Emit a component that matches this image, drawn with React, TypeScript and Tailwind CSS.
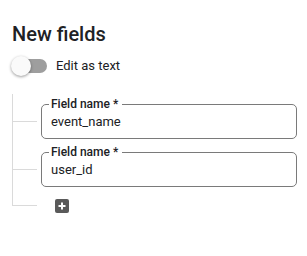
import React from "react";

function Field({ value }: { value: string }) {
  return (
    <div className="flex items-center">
      <div className="w-[24px] h-px bg-[#dadada]" />
      <div className="relative ml-[4px] flex-1 h-[35px] border border-[#7a7a7a] rounded-[5px] flex items-center pl-[9px]">
        <span className="absolute -top-[9px] left-[7px] pl-[2px] pr-[4px] bg-white text-[12px] leading-[16px] font-medium text-[#202124]">
          Field name *
        </span>
        <span className="text-[13px] leading-[20px] text-[#202124]">{value}</span>
      </div>
    </div>
  );
}

export default function App() {
  return (
    <div
      className="w-[307px] h-[256px] bg-white pl-3 pr-[10px] pt-[22px]"
      style={{ fontFamily: "Roboto, 'Liberation Sans', sans-serif" }}
    >
      <h2 className="text-[20px] leading-[24px] font-medium text-[#202124]">New fields</h2>
      <div className="mt-[10px] flex items-center">
        <div className="relative w-[36px] h-[20px] -ml-px">
          <div className="absolute left-[2px] top-[3px] w-[34px] h-[14px] rounded-full bg-[#9e9e9e]" />
          <div className="absolute left-0 top-0 w-[20px] h-[20px] rounded-full bg-[#fafafa] shadow-[0_1px_3px_rgba(0,0,0,0.4)]" />
        </div>
        <span className="ml-[9px] text-[13px] leading-[20px] text-[#202124]">Edit as text</span>
      </div>
      <div className="mt-[18px]">
        <div className="border-l border-[#dadada] pt-[10px] flex flex-col gap-[13px]">
          <Field value="event_name" />
          <Field value="user_id" />
        </div>
        <div className="flex">
          <div className="w-[25px] h-[19px] border-l border-b border-[#dadada]" />
          <button className="ml-[18px] mt-[12px] w-[14px] h-[14px]">
            <svg width="14" height="14" viewBox="0 0 14 14">
              <rect x="0" y="0" width="14" height="14" rx="2" fill="#5a5a5a" />
              <path d="M3.5 7h7M7 3.5v7" stroke="#fff" strokeWidth="2" />
            </svg>
          </button>
        </div>
      </div>
    </div>
  );
}
